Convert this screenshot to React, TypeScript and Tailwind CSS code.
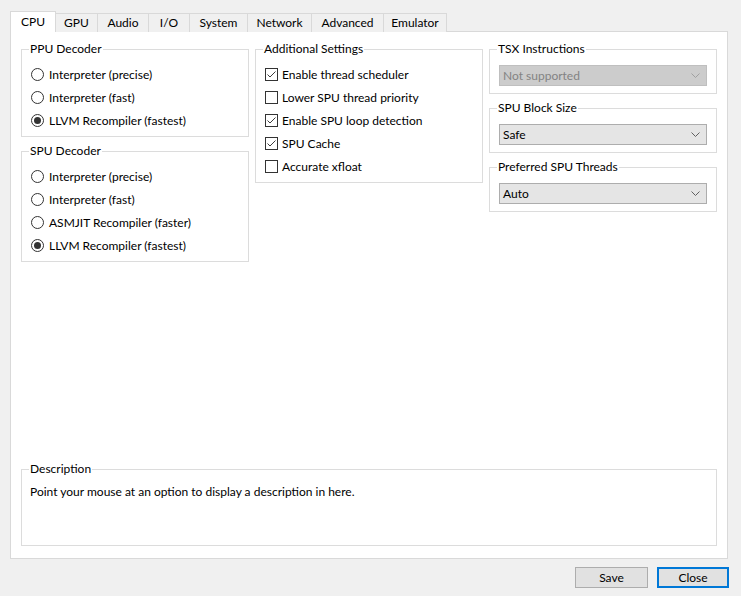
import { ReactNode } from 'react';

const tabs = [
  { label: 'CPU', w: 'w-[46px]' },
  { label: 'GPU', w: 'w-[42px]' },
  { label: 'Audio', w: 'w-[51px]' },
  { label: 'I/O', w: 'w-[41px]' },
  { label: 'System', w: 'w-[58px]' },
  { label: 'Network', w: 'w-[64px]' },
  { label: 'Advanced', w: 'w-[72px]' },
  { label: 'Emulator', w: 'w-[63px]' },
];

function GroupBox({ title, children, className = '' }: { title: string; children: ReactNode; className?: string }) {
  return (
    <fieldset className={`border border-[#dcdcdc] p-0 m-0 min-w-0 ${className}`}>
      <legend className="ml-[7px] px-px leading-[16px] h-[16px]">{title}</legend>
      {children}
    </fieldset>
  );
}

function Radio({ label, checked = false }: { label: string; checked?: boolean }) {
  return (
    <div className="h-[23px] flex items-center gap-[5px]">
      <span className="w-[13px] h-[13px] rounded-full border border-[#333333] bg-white flex items-center justify-center shrink-0">
        {checked && <span className="w-[7px] h-[7px] rounded-full bg-[#333333]" />}
      </span>
      <span>{label}</span>
    </div>
  );
}

function Check({ label, checked = false }: { label: string; checked?: boolean }) {
  return (
    <div className="h-[23px] flex items-center gap-[4px]">
      <span className="w-[13px] h-[13px] border border-[#333333] bg-white shrink-0 flex items-center justify-center">
        {checked && (
          <svg width="11" height="11" viewBox="0 0 11 11">
            <polyline points="1.5,5.5 4,8 9.5,2.5" fill="none" stroke="#3c3c3c" strokeWidth="1" />
          </svg>
        )}
      </span>
      <span>{label}</span>
    </div>
  );
}

function Combo({ value, disabled = false }: { value: string; disabled?: boolean }) {
  return (
    <div
      className={`h-[21px] flex items-center justify-between pl-[3px] pr-[6px] border ${
        disabled ? 'bg-[#cccccc] border-[#bfbfbf] text-[#838383]' : 'bg-[#e5e5e5] border-[#adadad] text-black'
      }`}
    >
      <span>{value}</span>
      <svg width="9" height="5" viewBox="0 0 9 5">
        <polyline points="0.5,0.5 4.5,4.5 8.5,0.5" fill="none" stroke={disabled ? '#a0a0a0' : '#606060'} strokeWidth="1" />
      </svg>
    </div>
  );
}

export default function App() {
  return (
    <div className="w-[741px] h-[596px] bg-[#f0f0f0] text-[12px] text-black font-['Lato','Liberation_Sans',sans-serif] overflow-hidden">
      <div className="pl-[10px] pt-[11px] flex items-end h-[32px]">
        {tabs.map((t, i) =>
          i === 0 ? (
            <div
              key={t.label}
              className={`${t.w} h-[21px] bg-white border border-b-0 border-[#d9d9d9] relative z-10 flex items-center justify-center`}
            >
              {t.label}
            </div>
          ) : (
            <div
              key={t.label}
              className={`${t.w} h-[19px] bg-[#f0f0f0] border border-l-0 border-b-0 border-[#d9d9d9] flex items-center justify-center`}
            >
              {t.label}
            </div>
          )
        )}
      </div>

      <div className="ml-[10px] -mt-px w-[718px] h-[528px] bg-white border border-[#d9d9d9] flex flex-col pt-[9px] px-[10px] pb-[12px]">
        <div className="grid grid-cols-3 gap-[6px] items-start">
          <div className="flex flex-col gap-[6px]">
            <GroupBox title="PPU Decoder">
              <div className="pt-[6px] pb-[4px] pl-[9px]">
                <Radio label="Interpreter (precise)" />
                <Radio label="Interpreter (fast)" />
                <Radio label="LLVM Recompiler (fastest)" checked />
              </div>
            </GroupBox>
            <GroupBox title="SPU Decoder">
              <div className="pt-[6px] pb-[4px] pl-[9px]">
                <Radio label="Interpreter (precise)" />
                <Radio label="Interpreter (fast)" />
                <Radio label="ASMJIT Recompiler (faster)" />
                <Radio label="LLVM Recompiler (fastest)" checked />
              </div>
            </GroupBox>
          </div>

          <GroupBox title="Additional Settings">
            <div className="pt-[6px] pb-[4px] pl-[9px]">
              <Check label="Enable thread scheduler" checked />
              <Check label="Lower SPU thread priority" />
              <Check label="Enable SPU loop detection" checked />
              <Check label="SPU Cache" checked />
              <Check label="Accurate xfloat" />
            </div>
          </GroupBox>

          <div className="flex flex-col gap-[6px]">
            <GroupBox title="TSX Instructions">
              <div className="pt-[8px] pb-[7px] px-[9px]">
                <Combo value="Not supported" disabled />
              </div>
            </GroupBox>
            <GroupBox title="SPU Block Size">
              <div className="pt-[8px] pb-[7px] px-[9px]">
                <Combo value="Safe" />
              </div>
            </GroupBox>
            <GroupBox title="Preferred SPU Threads">
              <div className="pt-[8px] pb-[7px] px-[9px]">
                <Combo value="Auto" />
              </div>
            </GroupBox>
          </div>
        </div>

        <GroupBox title="Description" className="mt-auto h-[85px]">
          <div className="pt-[7px] pl-[8px] leading-[16px]">
            Point your mouse at an option to display a description in here.
          </div>
        </GroupBox>
      </div>

      <div className="flex justify-end gap-[9px] pr-[12px] mt-[8px]">
        <button className="w-[73px] h-[21px] bg-[#e1e1e1] border border-[#adadad] flex items-center justify-center">
          Save
        </button>
        <button className="w-[72px] h-[21px] bg-[#e1e1e1] border-2 border-[#0078d7] flex items-center justify-center">
          Close
        </button>
      </div>
    </div>
  );
}
